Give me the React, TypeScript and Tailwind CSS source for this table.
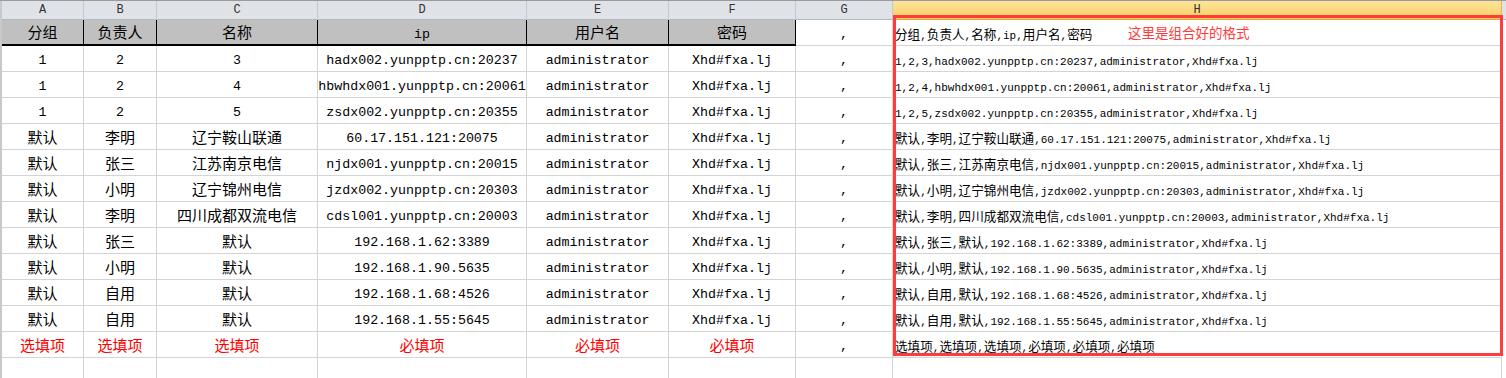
import React from "react";

const CJK = /([\u3000-\u9fff\uff00-\uffef]+)/;

function Txt({ s, big }: { s: string; big?: boolean }) {
  const parts = s.split(CJK).filter((p) => p.length > 0);
  return (
    <span className="whitespace-nowrap">
      {parts.map((p, i) =>
        CJK.test(p) ? (
          <span
            key={i}
            className={
              big
                ? "text-[15px] font-normal [font-family:'Noto_Sans_CJK_SC',sans-serif]"
                : "text-[12.6px] font-normal [font-family:'Noto_Sans_CJK_SC',sans-serif]"
            }
          >
            {p}
          </span>
        ) : (
          <span
            key={i}
            className={
              big
                ? "text-[13.3px] [font-family:'Liberation_Mono',monospace]"
                : "text-[11px] [font-family:'Liberation_Mono',monospace]"
            }
          >
            {p}
          </span>
        )
      )}
    </span>
  );
}

const widths = [
  "w-[82px]",
  "w-[73px]",
  "w-[161px]",
  "w-[209px]",
  "w-[142px]",
  "w-[127px]",
  "w-[97px]",
];

const letters = ["A", "B", "C", "D", "E", "F", "G"];
const heads = ["分组", "负责人", "名称", "ip", "用户名", "密码"];

const data: string[][] = [
  ["1", "2", "3", "hadx002.yunpptp.cn:20237"],
  ["1", "2", "4", "hbwhdx001.yunpptp.cn:20061"],
  ["1", "2", "5", "zsdx002.yunpptp.cn:20355"],
  ["默认", "李明", "辽宁鞍山联通", "60.17.151.121:20075"],
  ["默认", "张三", "江苏南京电信", "njdx001.yunpptp.cn:20015"],
  ["默认", "小明", "辽宁锦州电信", "jzdx002.yunpptp.cn:20303"],
  ["默认", "李明", "四川成都双流电信", "cdsl001.yunpptp.cn:20003"],
  ["默认", "张三", "默认", "192.168.1.62:3389"],
  ["默认", "小明", "默认", "192.168.1.90.5635"],
  ["默认", "自用", "默认", "192.168.1.68:4526"],
  ["默认", "自用", "默认", "192.168.1.55:5645"],
];

function Row({
  cells,
  red,
  h,
  last,
}: {
  cells: string[];
  red?: boolean;
  h: string;
  last?: boolean;
}) {
  return (
    <div className="flex h-[26px] shrink-0">
      <div className="w-[2px] bg-[#c6c9ce] shrink-0" />
      {cells.map((c, i) => (
        <div
          key={i}
          className={`${widths[i]} shrink-0 flex items-center justify-center border-r border-r-[#d4d4d4] ${
            last ? "" : "border-b border-b-[#d4d4d4]"
          } ${red && i < 6 ? "text-[#ff0000]" : "text-black"}`}
        >
          <Txt s={c} big />
        </div>
      ))}
      <div
        className={`w-[609px] shrink-0 flex items-center pl-[2px] border-r border-r-[#d4d4d4] ${
          last ? "" : "border-b border-b-[#d4d4d4]"
        } text-black`}
      >
        <Txt s={h} />
      </div>
      <div className="flex-1 bg-white" />
    </div>
  );
}

export default function App() {
  const rows = data.map((d) => [...d, "administrator", "Xhd#fxa.lj", ","]);
  return (
    <div className="relative w-[1506px] h-[378px] overflow-hidden bg-white">
      {/* column header */}
      <div className="flex h-[20px] border-t border-t-[#9a9a9a]">
        <div className="w-[2px] bg-[#c6c9ce] shrink-0" />
        {letters.map((l, i) => (
          <div
            key={l}
            className={`${widths[i]} shrink-0 flex items-center justify-center bg-[#dfe3e8] border-r border-r-[#c3c8ce] border-b border-b-[#b4b9bf] text-[#333] text-[12px] [font-family:'Liberation_Mono',monospace]`}
          >
            {l}
          </div>
        ))}
        <div className="w-[609px] shrink-0 flex items-center justify-center bg-gradient-to-b from-[#fde49a] to-[#f9cd5c] border-r border-r-[#e3b457] border-b border-b-[#e0a83c] text-[#333] text-[12px] [font-family:'Liberation_Mono',monospace]">
          H
        </div>
        <div className="flex-1 bg-[#dfe3e8] border-b border-b-[#b4b9bf]" />
      </div>
      {/* header row */}
      <div className="flex h-[26px]">
        <div className="w-[2px] bg-[#c6c9ce] shrink-0" />
        {heads.map((t, i) => (
          <div
            key={t}
            className={`${widths[i]} shrink-0 flex items-center justify-center bg-[#c0c0c0] border-r border-r-black border-b-2 border-b-black text-black`}
          >
            <Txt s={t} big />
          </div>
        ))}
        <div className="w-[97px] shrink-0 flex items-center justify-center border-r border-r-[#d4d4d4] border-b border-b-[#d4d4d4] text-black">
          <Txt s="," big />
        </div>
        <div className="w-[609px] shrink-0 flex items-center pl-[2px] border-r border-r-[#d4d4d4] border-b border-b-[#d4d4d4] text-black">
          <Txt s="分组,负责人,名称,ip,用户名,密码" />
        </div>
        <div className="flex-1" />
      </div>
      {rows.map((r, i) => (
        <Row key={i} cells={r} h={r.slice(0, 6).join(",")} />
      ))}
      <Row
        cells={["选填项", "选填项", "选填项", "必填项", "必填项", "必填项", ","]}
        red
        h="选填项,选填项,选填项,必填项,必填项,必填项"
      />
      <Row cells={["", "", "", "", "", "", ""]} h="" last />

      {/* annotation overlay */}
      <div className="absolute left-[893px] top-[15px] w-[610px] h-[341px] border-[3px] border-[#ff3b3b] pointer-events-none" />
      <div className="absolute left-[1128px] top-[22px] text-[13.5px] leading-[20px] text-[#ff3b3b] [font-family:'Noto_Sans_CJK_SC',sans-serif]">
        这里是组合好的格式
      </div>
    </div>
  );
}
